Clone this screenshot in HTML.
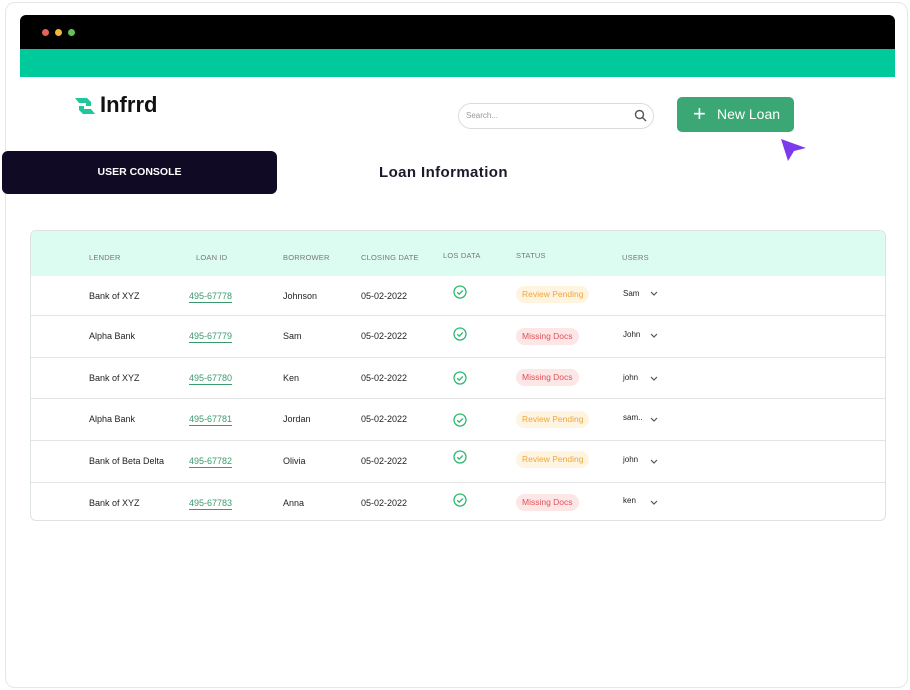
<!DOCTYPE html>
<html><head><meta charset="utf-8"><style>
*{margin:0;padding:0;box-sizing:border-box}
body{width:910px;height:690px;background:#fff;font-family:"Liberation Sans",sans-serif;position:relative;overflow:hidden}
.frame{position:absolute;left:5px;top:2px;width:903px;height:686px;border:1px solid #e6e6e6;border-radius:10px;background:#fff}
.abs{position:absolute}
.tbl{position:absolute;left:30px;top:230px;width:856px;height:291px;border:1px solid #dde3e2;border-radius:6px;overflow:hidden}
.hd{height:45px;background:#dcfcf2;position:relative}
.hd span{position:absolute;top:22px;font-size:7.5px;color:#777;letter-spacing:.2px}
.row{height:41.7px;border-top:1px solid #e4e4e4;position:relative;font-size:9px;color:#222}
.row span{position:absolute;top:15px}
.lid{color:#3a9a6c;border-bottom:1px solid #3a9a6c;padding-bottom:1px}
.pill{position:absolute;top:10px;height:17px;line-height:17px;padding:0 6px;border-radius:9px;font-size:8.5px}
.rp{background:#fff4e0;color:#f0a63a}
.md{background:#fde6e6;color:#e0525a}
.chev{position:absolute;left:619px}
</style></head><body>
<div class="frame"></div>
<div class="abs" style="left:20px;top:15px;width:875px;height:34px;background:#000;border-radius:6px 6px 0 0"></div>
<div class="abs" style="left:42px;top:29px;width:7px;height:7px;border-radius:50%;background:#e8625a"></div>
<div class="abs" style="left:55px;top:29px;width:7px;height:7px;border-radius:50%;background:#f0b73e"></div>
<div class="abs" style="left:68px;top:29px;width:7px;height:7px;border-radius:50%;background:#5fc453"></div>
<div class="abs" style="left:20px;top:49px;width:875px;height:28px;background:#00c99b"></div>
<svg class="abs" style="left:73px;top:96px" width="24" height="20" viewBox="0 0 24 20"><path d="M2 2h12l4 4v4h-5V7H6l-4-5z" fill="#1fc79a"/><path d="M22 18H10l-4-4v-4h5v3h7l4 5z" fill="#1fc79a"/></svg>
<div class="abs" style="left:100px;top:92px;font-size:22px;font-weight:bold;color:#111">Infrrd</div>
<div class="abs" style="left:458px;top:103px;width:196px;height:26px;border:1px solid #dcdcdc;border-radius:13px"></div>
<div class="abs" style="left:466px;top:111px;font-size:8px;color:#999">Search...</div>
<svg class="abs" style="left:634px;top:109px" width="13" height="13" viewBox="0 0 13 13"><circle cx="5.5" cy="5.5" r="4" fill="none" stroke="#555" stroke-width="1.4"/><path d="M8.5 8.5l3.5 3.5" stroke="#555" stroke-width="1.4"/></svg>
<div class="abs" style="left:677px;top:97px;width:117px;height:35px;background:#3aa775;border-radius:5px;color:#fff;font-size:14px;line-height:35px"><span style="position:absolute;left:16px;font-size:22px;top:-1px">+</span><span style="position:absolute;left:40px">New Loan</span></div>
<svg class="abs" style="left:779px;top:137px" width="28" height="26" viewBox="0 0 28 26"><path d="M2 2l25 9-12 3-6 10z" fill="#7c3aed"/></svg>
<div class="abs" style="left:2px;top:151px;width:275px;height:43px;background:#110a24;border-radius:6px;color:#fff;font-size:10.5px;font-weight:bold;line-height:43px;text-align:center">USER CONSOLE</div>
<div class="abs" style="left:379px;top:164px;font-size:15px;font-weight:bold;color:#1a1a2a;letter-spacing:.4px">Loan Information</div>
<div class="tbl">
<div class="hd"><span style="left:58px">LENDER</span><span style="left:165px">LOAN ID</span><span style="left:252px">BORROWER</span><span style="left:330px">CLOSING DATE</span><span style="left:412px;top:20px">LOS DATA</span><span style="left:485px;top:20px">STATUS</span><span style="left:591px">USERS</span></div>
<div class="row" style="border-top:none;height:39px"><span style="left:58px">Bank of XYZ</span><span class="lid" style="left:158px">495-67778</span><span style="left:252px">Johnson</span><span style="left:330px">05-02-2022</span><svg style="position:absolute;left:422px;top:9px" width="14" height="14"><circle cx="7" cy="7" r="6" fill="none" stroke="#2eb872" stroke-width="1.3"/><path d="M4.2 7.2l2 2 3.6-3.8" fill="none" stroke="#2eb872" stroke-width="1.3"/></svg><div class="pill rp" style="left:485px">Review Pending</div><span style="left:592px;top:13px;font-size:8px">Sam</span><svg class="chev" style="top:15px" width="8" height="6"><path d="M1 1l3 3 3-3" fill="none" stroke="#555" stroke-width="1.2"/></svg></div>
<div class="row"><span style="left:58px">Alpha Bank</span><span class="lid" style="left:158px">495-67779</span><span style="left:252px">Sam</span><span style="left:330px">05-02-2022</span><svg style="position:absolute;left:422px;top:11px" width="14" height="14"><circle cx="7" cy="7" r="6" fill="none" stroke="#2eb872" stroke-width="1.3"/><path d="M4.2 7.2l2 2 3.6-3.8" fill="none" stroke="#2eb872" stroke-width="1.3"/></svg><div class="pill md" style="left:485px;top:12px">Missing Docs</div><span style="left:592px;top:14px;font-size:8px">John</span><svg class="chev" style="top:17px" width="8" height="6"><path d="M1 1l3 3 3-3" fill="none" stroke="#555" stroke-width="1.2"/></svg></div>
<div class="row"><span style="left:58px">Bank of XYZ</span><span class="lid" style="left:158px">495-67780</span><span style="left:252px">Ken</span><span style="left:330px">05-02-2022</span><svg style="position:absolute;left:422px;top:13px" width="14" height="14"><circle cx="7" cy="7" r="6" fill="none" stroke="#2eb872" stroke-width="1.3"/><path d="M4.2 7.2l2 2 3.6-3.8" fill="none" stroke="#2eb872" stroke-width="1.3"/></svg><div class="pill md" style="left:485px;top:11px">Missing Docs</div><span style="left:592px;top:15px;font-size:8px">john</span><svg class="chev" style="top:18px" width="8" height="6"><path d="M1 1l3 3 3-3" fill="none" stroke="#555" stroke-width="1.2"/></svg></div>
<div class="row"><span style="left:58px">Alpha Bank</span><span class="lid" style="left:158px">495-67781</span><span style="left:252px">Jordan</span><span style="left:330px">05-02-2022</span><svg style="position:absolute;left:422px;top:14px" width="14" height="14"><circle cx="7" cy="7" r="6" fill="none" stroke="#2eb872" stroke-width="1.3"/><path d="M4.2 7.2l2 2 3.6-3.8" fill="none" stroke="#2eb872" stroke-width="1.3"/></svg><div class="pill rp" style="left:485px;top:12px">Review Pending</div><span style="left:592px;top:14px;font-size:8px">sam..</span><svg class="chev" style="top:18px" width="8" height="6"><path d="M1 1l3 3 3-3" fill="none" stroke="#555" stroke-width="1.2"/></svg></div>
<div class="row"><span style="left:58px">Bank of Beta Delta</span><span class="lid" style="left:158px">495-67782</span><span style="left:252px">Olivia</span><span style="left:330px">05-02-2022</span><svg style="position:absolute;left:422px;top:9px" width="14" height="14"><circle cx="7" cy="7" r="6" fill="none" stroke="#2eb872" stroke-width="1.3"/><path d="M4.2 7.2l2 2 3.6-3.8" fill="none" stroke="#2eb872" stroke-width="1.3"/></svg><div class="pill rp" style="left:485px;top:10px">Review Pending</div><span style="left:592px;top:14px;font-size:8px">john</span><svg class="chev" style="top:18px" width="8" height="6"><path d="M1 1l3 3 3-3" fill="none" stroke="#555" stroke-width="1.2"/></svg></div>
<div class="row"><span style="left:58px">Bank of XYZ</span><span class="lid" style="left:158px">495-67783</span><span style="left:252px">Anna</span><span style="left:330px">05-02-2022</span><svg style="position:absolute;left:422px;top:10px" width="14" height="14"><circle cx="7" cy="7" r="6" fill="none" stroke="#2eb872" stroke-width="1.3"/><path d="M4.2 7.2l2 2 3.6-3.8" fill="none" stroke="#2eb872" stroke-width="1.3"/></svg><div class="pill md" style="left:485px;top:11px">Missing Docs</div><span style="left:592px;top:13px;font-size:8px">ken</span><svg class="chev" style="top:17px" width="8" height="6"><path d="M1 1l3 3 3-3" fill="none" stroke="#555" stroke-width="1.2"/></svg></div>
</div>
</body></html>
